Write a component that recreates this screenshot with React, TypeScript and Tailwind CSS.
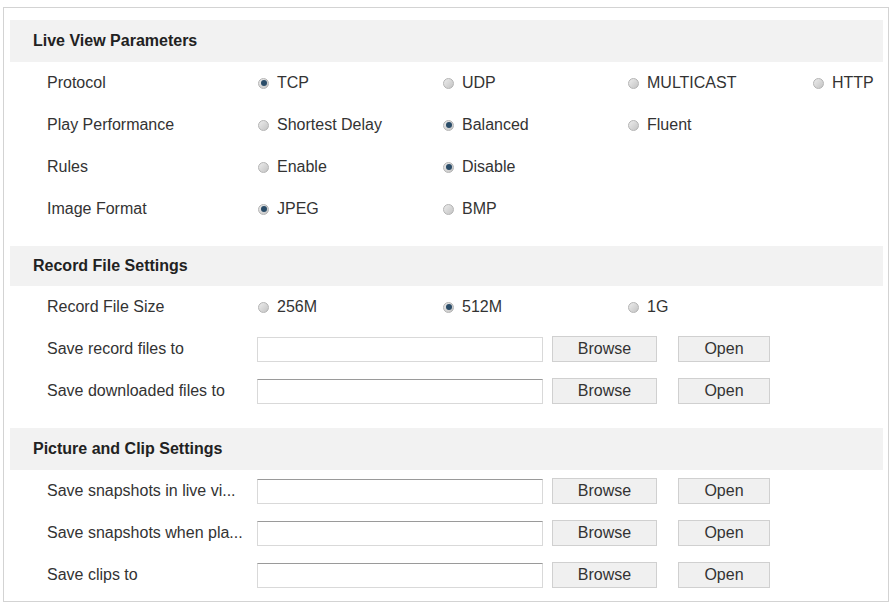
const font = { fontFamily: '"Liberation Sans", Arial, sans-serif' };

interface RadioRow {
    label: string;
    options: string[];
    selected: number;
}

const liveView: RadioRow[] = [
    { label: "Protocol", options: ["TCP", "UDP", "MULTICAST", "HTTP"], selected: 0 },
    { label: "Play Performance", options: ["Shortest Delay", "Balanced", "Fluent"], selected: 1 },
    { label: "Rules", options: ["Enable", "Disable"], selected: 1 },
    { label: "Image Format", options: ["JPEG", "BMP"], selected: 0 },
];

function Radio({ checked }: { checked: boolean }) {
    return (
        <span className="w-[11px] h-[11px] rounded-full border border-[#b4b4b4] bg-gradient-to-br from-[#ececec] to-[#c4c4c4] flex items-center justify-center shrink-0">
            {checked && <span className="w-[6px] h-[6px] rounded-full bg-[#2a4c68]" />}
        </span>
    );
}

function SectionHeader({ title, h }: { title: string; h: string }) {
    return (
        <div className={`${h} bg-[#f2f2f2] flex items-center pl-[23px] text-[16px] font-bold text-[#222]`}>
            {title}
        </div>
    );
}

function OptionsRow({ row }: { row: RadioRow }) {
    return (
        <div className="h-[42px] flex items-center pl-[37px]">
            <div className="w-[211px] shrink-0">{row.label}</div>
            {row.options.map((opt, i) => (
                <label key={opt} className="w-[185px] shrink-0 flex items-center gap-[8px]">
                    <Radio checked={i === row.selected} />
                    <span className="whitespace-nowrap">{opt}</span>
                </label>
            ))}
        </div>
    );
}

function PathRow({ label, darkTop }: { label: string; darkTop?: boolean }) {
    return (
        <div className="h-[42px] flex items-center pl-[37px]">
            <div className="w-[210px] shrink-0 whitespace-nowrap">{label}</div>
            <input
                className={`w-[286px] h-[25px] border border-[#d9d9d9] ${darkTop ? "border-t-[#9a9a9a]" : ""} bg-white outline-none`}
            />
            <button className="ml-[9px] w-[105px] h-[26px] border border-[#d0d0d0] bg-[#f0f0f0] text-[#333]">
                Browse
            </button>
            <button className="ml-[21px] w-[92px] h-[26px] border border-[#d0d0d0] bg-[#f0f0f0] text-[#333]">
                Open
            </button>
        </div>
    );
}

export default function App() {
    return (
        <div className="w-[892px] h-[603px] bg-white pl-[3px] pt-[7px] overflow-hidden" style={font}>
            <div className="w-[886px] h-[595px] border border-[#d3d3d3] pt-[12px] pl-[6px] pr-[5px] text-[16px] text-[#333]">
                {/* Live View */}
                <SectionHeader title="Live View Parameters" h="h-[42px]" />
                {liveView.map((row) => (
                    <OptionsRow key={row.label} row={row} />
                ))}

                {/* Record File */}
                <div className="mt-[16px]">
                    <SectionHeader title="Record File Settings" h="h-[40px]" />
                </div>
                <OptionsRow row={{ label: "Record File Size", options: ["256M", "512M", "1G"], selected: 1 }} />
                <PathRow label="Save record files to" />
                <PathRow label="Save downloaded files to" darkTop />

                {/* Picture and Clip */}
                <div className="mt-[16px]">
                    <SectionHeader title="Picture and Clip Settings" h="h-[42px]" />
                </div>
                <PathRow label="Save snapshots in live vi..." darkTop />
                <PathRow label="Save snapshots when pla..." darkTop />
                <PathRow label="Save clips to" darkTop />
            </div>
        </div>
    );
}
